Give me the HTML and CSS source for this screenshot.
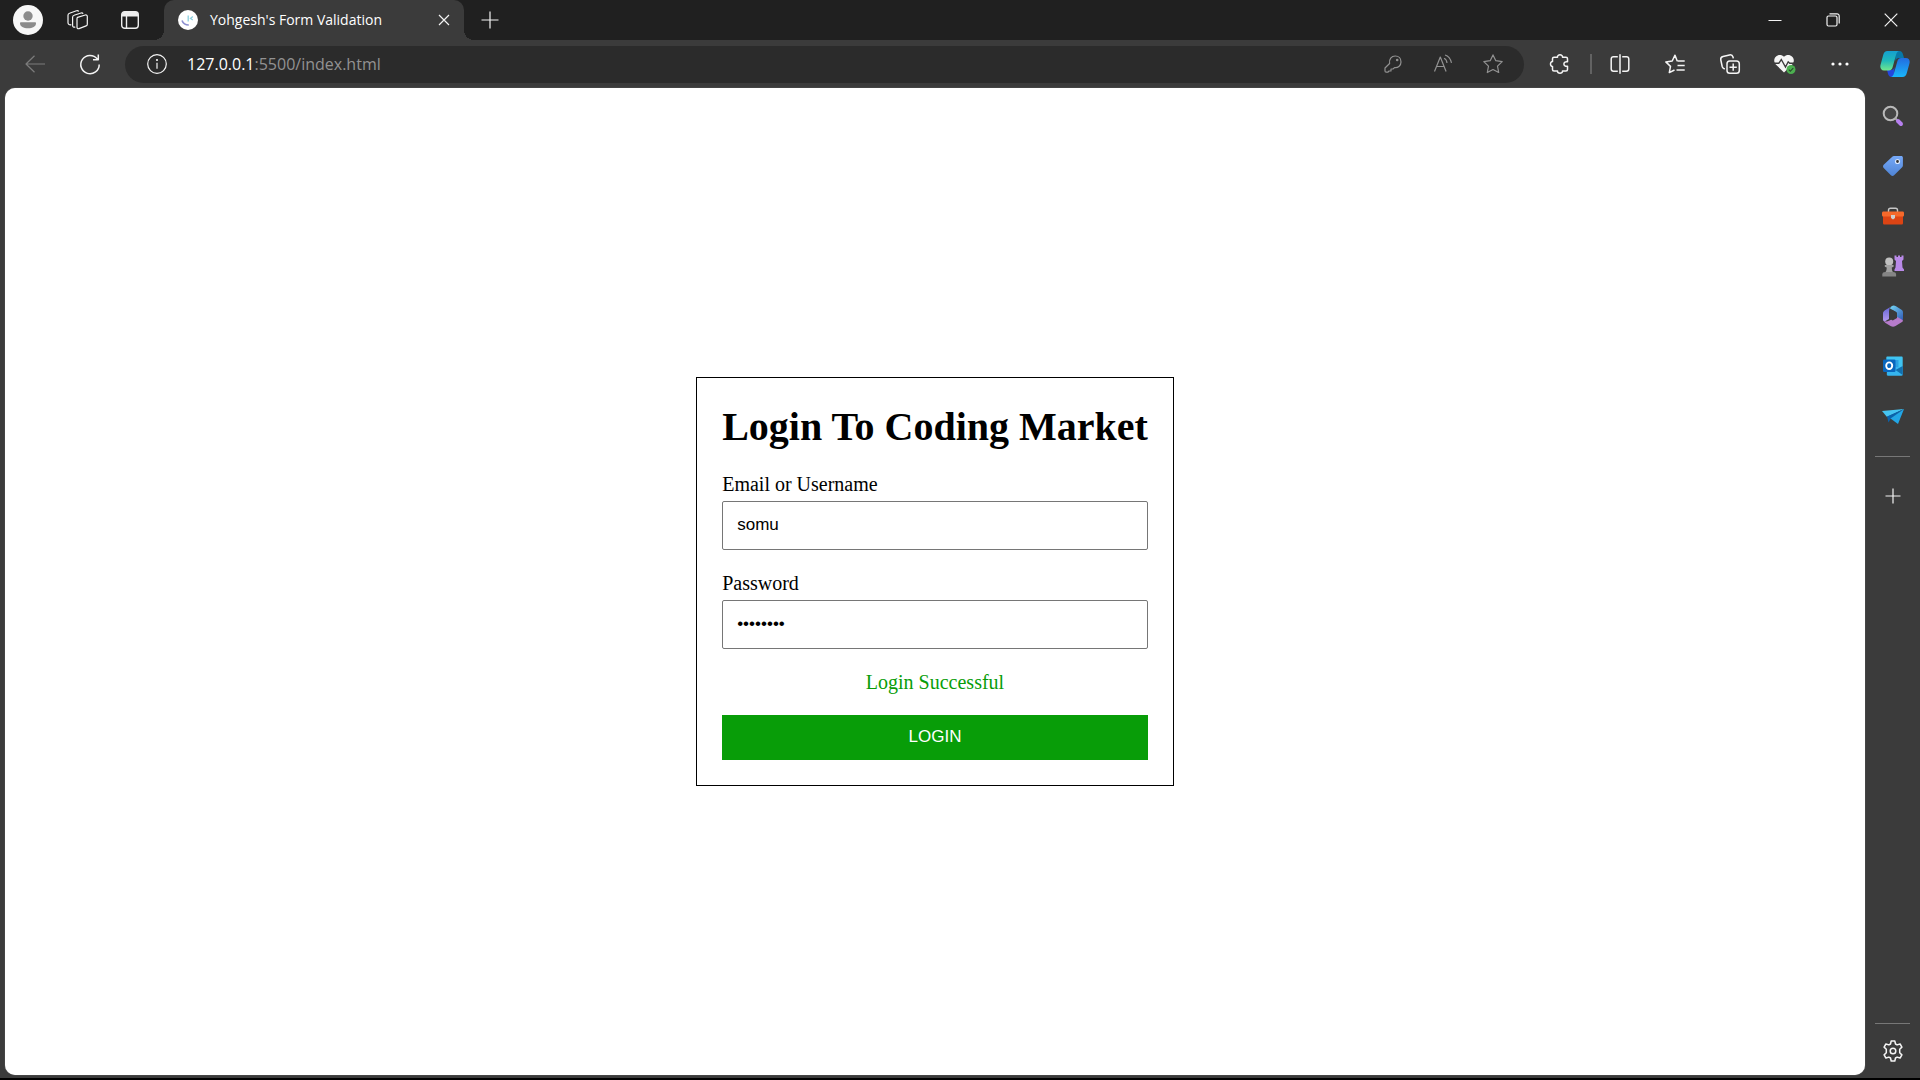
FILE: index.html
```html
<!DOCTYPE html>
<html lang="en">
<head>
<meta charset="utf-8">
<title>Yohgesh's Form Validation</title>
<link rel="stylesheet" href="styles.css">
</head>
<body class="browser">
<header class="titlebar">
  <button class="icon-btn" aria-label="Profile"><svg width="30" height="30" viewBox="0 0 30 30"><circle cx="15" cy="15" r="15" fill="#f7f7f7"/><circle cx="15" cy="11" r="4.7" fill="#8b8b8b"/><path d="M8 17.3h14c.6 0 1 .5 1 1 0 3.300-3.500 5-8 5s-8-1.700-8-5c0-.5.400-1 1-1z" fill="#8b8b8b"/></svg></button>
  <button class="icon-btn" aria-label="Workspaces"><svg width="24" height="22" viewBox="0 0 24 22" class="line"><path d="M10.500 8.400 18.300 6c1.100-.3 2 .3 2 1.400v7.800c0 .8-.4 1.400-1.200 1.700L12 19.600c-1.100.4-2-.2-2-1.300V9.700c0-.7.1-1.100.5-1.300zM8.300 18c-1.500.5-2.700-.1-2.700-1.600V8.300c0-1 .5-1.700 1.500-2L14 4c1-.3 1.700 0 2.100.8M4.300 15.700C2.500 16.200 1 15.300 1 13.700V6.200c0-1 .5-1.700 1.500-2l7-2.500c1-.3 1.800 0 2.200.8"/></svg></button>
  <button class="icon-btn" aria-label="Tab actions"><svg width="18" height="18" viewBox="0 0 18 18"><rect x=".7" y=".7" width="16.600" height="16.600" rx="3" fill="none" stroke="#eee" stroke-width="1.400"/><path d="M1 5V3a2 2 0 0 1 2-2h12a2 2 0 0 1 2 2v2.500H1z" fill="#eee"/><path d="M5.500 5v12" stroke="#eee" stroke-width="1.400"/></svg></button>
  <div class="tab">
    <svg width="20" height="20" viewBox="0 0 20 20" aria-hidden="true"><circle cx="10" cy="10" r="10" fill="#fff"/><path d="M4 10.500c1 2.700 3.500 4.500 6.800 4.500" fill="none" stroke="#8c8fd0" stroke-width="1.600"/><path d="M10.200 5.500v6M14.800 6.500l-2.300 2 2.300 1.500" fill="none" stroke="#8ccfdf" stroke-width="1.300"/></svg>
    <span class="tab-title">Yohgesh's Form Validation</span>
    <button class="tab-close" aria-label="Close tab"><svg width="12" height="12" viewBox="0 0 12 12" class="line"><path d="m1 1 10 10M11 1 1 11"/></svg></button>
  </div>
  <button class="icon-btn" aria-label="New tab"><svg width="18" height="18" viewBox="0 0 18 18" class="line"><path d="M9 .5v17M.5 9h17"/></svg></button>
  <div class="window-controls">
    <button class="win-btn" aria-label="Minimize"><svg width="14" height="14" viewBox="0 0 14 14" class="line crisp"><path d="M.5 7.500h13"/></svg></button>
    <button class="win-btn" aria-label="Restore"><svg width="14" height="14" viewBox="0 0 14 14" class="line"><rect x="1" y="3" width="10" height="10" rx="1.500"/><path d="M3.500.8h7.500a2.200 2.200 0 0 1 2.200 2.200v7.500"/></svg></button>
    <button class="win-btn" aria-label="Close"><svg width="14" height="14" viewBox="0 0 14 14" class="line"><path d="m.7.7 12.600 12.600M13.300.7.7 13.300"/></svg></button>
  </div>
</header>
<nav class="toolbar" aria-label="Browser">
  <button class="icon-btn dim" aria-label="Back"><svg width="20" height="18" viewBox="0 0 20 18" class="line"><path d="M9.500.7 1 9l8.500 8.300M1 9h19"/></svg></button>
  <button class="icon-btn" aria-label="Refresh"><svg width="20" height="20" viewBox="0 0 20 20" class="line bold"><path d="M17.300 5A9.200 9.200 0 1 0 19.200 10.500M18.300.5v5.300H13"/></svg></button>
  <div class="address">
    <button class="icon-btn" aria-label="Site information"><svg width="20" height="20" viewBox="0 0 20 20" class="line"><circle cx="10" cy="10" r="9.300"/><path d="M10 8.700v6"/><circle cx="10" cy="6" r=".5"/></svg></button>
    <div class="url" role="textbox" aria-label="Address" contenteditable="true" spellcheck="false"><span class="url-host">127.0.0.1</span>:5500/index.html</div>
    <button class="icon-btn grey" aria-label="Saved passwords"><svg width="20" height="20" viewBox="0 0 20 20" class="line"><path d="M6.600 9.500C5.800 5 8.500 2 12.200 2S18 4.700 18 8s-2.700 6-6.500 5.600L10 15H8v2H6l-1 1.200H3.200c-.8 0-1.200-.4-1.200-1.200V14z"/><circle cx="14.200" cy="6" r=".7"/></svg></button>
    <button class="icon-btn grey" aria-label="Read aloud"><svg width="20" height="20" viewBox="0 0 20 20" class="line"><path d="m1.500 17.500 5.800-14.500 5.800 14.500M3.500 12.500h7.700M11 4.300c1.700.7 2.800 2.400 3 4.700M12 1c3.400 1 5.600 4 6.500 7.800"/></svg></button>
    <button class="icon-btn grey" aria-label="Add to favorites"><svg width="20" height="20" viewBox="0 0 20 20" class="line"><path d="m10 .9 2.800 5.800 6.400.9-4.700 4.500 1.200 6.400-5.700-3-5.700 3 1.200-6.400L.8 7.600l6.400-.9z"/></svg></button>
  </div>
  <button class="icon-btn" aria-label="Extensions"><svg width="20" height="20" viewBox="0 0 20 20" class="line bold"><path d="M4 3.200h3.500C7.300 1.700 8.500.8 10 .8s2.700.9 2.500 2.400H16c.9 0 1.500.6 1.500 1.500v3.100c-2-.4-3.600.5-3.600 2.200s1.600 2.600 3.600 2.200v3.300c0 .9-.6 1.500-1.500 1.500h-3.500c.2 1.400-1 2.300-2.500 2.300s-2.700-.9-2.500-2.300H4c-.9 0-1.500-.6-1.500-1.500v-3C1.300 12.600.5 11.300.5 10s.8-2.500 2-2.400V4.700c0-.9.600-1.500 1.500-1.500z"/></svg></button>
  <span class="divider"></span>
  <button class="icon-btn" aria-label="Split screen"><svg width="20" height="20" viewBox="0 0 20 20" class="line bold"><path d="M7.800 2.800H3.500A2.300 2.300 0 0 0 1.200 5v10a2.300 2.300 0 0 0 2.300 2.200h4.300M12.200 2.800h4.300A2.300 2.300 0 0 1 18.800 5v10a2.300 2.300 0 0 1-2.300 2.200h-4.300M10 .3v19.400"/></svg></button>
  <button class="icon-btn" aria-label="Favorites"><svg width="20" height="20" viewBox="0 0 20 20" class="line bold"><path d="M12.300 7.300 10 1.200 7.200 7l-6.400.9 4.700 4.500-1.200 6.200L9.500 16M12.500 7h7.200M12.500 11.500h7.200M11.500 16h8.200"/></svg></button>
  <button class="icon-btn" aria-label="Collections"><svg width="20" height="20" viewBox="0 0 20 20" class="line bold"><rect x="7" y="7" width="12.300" height="12.300" rx="2.800"/><path d="M13.200 9.500v7.300M9.500 13.200h7.300M4.800 15 3.500 14.300a3 3 0 0 1-1.300-1.800L.8 6A3 3 0 0 1 3 2.500L9.500.9A3 3 0 0 1 13 3l.3 1.300"/></svg></button>
  <button class="icon-btn" aria-label="Browser essentials"><svg width="22" height="20" viewBox="0 0 22 20"><path d="M10 18.500 1.800 10.500C-.3 8.200-.3 4.900 1.800 2.700 4 .5 7.700.4 10 2.800 12.300.4 16 .5 18.200 2.700s2.100 5.500 0 7.800z" fill="#f4f4f4"/><path d="M0 9.300h4.800L7.300 5.500l4.200 7.500 2.700-5.200 1.500 1.500H21" fill="none" stroke="#3b3b3b" stroke-width="1.400"/><circle cx="17" cy="15.500" r="4.500" fill="#4caf50"/><path d="m14.800 15.600 1.500 1.500 3-3" fill="none" stroke="#294d2b" stroke-width="1.100"/></svg></button>
  <button class="icon-btn" aria-label="Settings and more"><svg width="18" height="4" viewBox="0 0 18 4" fill="#fff"><circle cx="2" cy="2" r="1.600"/><circle cx="9" cy="2" r="1.600"/><circle cx="16" cy="2" r="1.600"/></svg></button>
  <button class="icon-btn" aria-label="Copilot"><svg width="30" height="28" viewBox="0 0 30 28"><defs><linearGradient id="ca" x1="0" y1="0" x2="0" y2="1"><stop stop-color="#159fd0"/><stop offset=".5" stop-color="#20b9ba"/><stop offset="1" stop-color="#72e78c"/></linearGradient><linearGradient id="cb" x1="0" y1="0" x2="0" y2="1"><stop stop-color="#236ce0"/><stop offset="1" stop-color="#19b6fb"/></linearGradient></defs><path d="M15 1h4.500c2 0 2.900 1.400 3.500 3.500L24 8h-5c-2 0-3 1-3.500 3z" fill="#0878a8"/><path d="M14 27h-2.500c-2 0-3-1.300-3.500-3.200L7 20h4c2 0 3-1 3.600-3z" fill="#2446dc"/><path d="M7.500 1H19c-1.700.5-2.500 2-3 4l-3.300 12c-.6 2.300-1.700 3.500-4 3.500H4C1.200 20.500-.2 18 .5 15L3.200 5C3.900 2.500 5.200 1 7.500 1z" fill="url(#ca)"/><path d="M22.500 27H11c1.700-.5 2.500-2 3-4l3.300-11.500c.6-2.300 1.700-3.500 4-3.500H26c2.800 0 4.200 2.300 3.500 5.300L26.800 23c-.7 2.500-2 4-4.300 4z" fill="url(#cb)"/></svg></button>
</nav>
<div class="content">
  <main class="page">
    <form class="login-card" onsubmit="return false">
      <h1 class="login-title">Login To Coding Market</h1>
      <div class="field"><label for="username">Email or Username</label><input class="text-box" id="username" type="text" value="somu"></div>
      <div class="field"><label for="password">Password</label><input class="text-box" id="password" type="password" value="password"></div>
      <p class="message">Login Successful</p>
      <button class="login-btn" type="submit">LOGIN</button>
    </form>
  </main>
  <aside class="sidebar" aria-label="Sidebar">
    <button class="side-btn" aria-label="Search"><svg width="22" height="22" viewBox="0 0 22 22"><circle cx="8.500" cy="8.500" r="6.800" fill="#454545" stroke="#b9b9b9" stroke-width="2"/><path d="m13 13 3 3" stroke="#aaa" stroke-width="2"/><path d="m16 16 3 3" stroke="#b780f0" stroke-width="4" stroke-linecap="round"/></svg></button>
    <button class="side-btn" aria-label="Shopping"><svg width="22" height="22" viewBox="0 0 22 22"><defs><linearGradient id="t" x1="0" y1="0" x2="0" y2="1"><stop stop-color="#76a9f8"/><stop offset="1" stop-color="#4f84d5"/></linearGradient></defs><path d="M12.500 1h6.700c1 0 1.700.7 1.700 1.700v7.500c0 1-.3 1.600-1 2.300l-7.800 7.700c-1 1-2.200 1-3.200 0L1.700 13c-.9-1-.9-2.200 0-3.200L10 1.900c.8-.7 1.500-.9 2.500-.9z" fill="url(#t)"/><circle cx="15.500" cy="6.500" r="2" fill="#333" stroke="#d7e7ff" stroke-width="1.200"/></svg></button>
    <button class="side-btn" aria-label="Tools"><svg width="22" height="20" viewBox="0 0 22 20"><path d="M6.500 6V4.300c0-1.200.7-2 2-2h5c1.300 0 2 .8 2 2V6" fill="none" stroke="#c6c6c6" stroke-width="1.400"/><path d="M1 9h20v8c0 1-.6 1.500-1.500 1.500h-17C1.600 18.500 1 18 1 17z" fill="#dc4414"/><path d="M0 7c0-.9.500-1.500 1.500-1.500h19c1 0 1.500.6 1.500 1.500v2c0 1-.5 1.500-1.500 1.500h-19C.5 10.500 0 10 0 9z" fill="#f5692b"/><path d="M9 9h4v3l-2 1.500L9 12z" fill="#cfcfcf"/></svg></button>
    <button class="side-btn" aria-label="Games"><svg width="22" height="24" viewBox="0 0 22 24"><path d="M12.500 1.500h2V3H16V1.500h2V3h1.500V1.500h2v4L20 7l.5 6.500 1.500 2V17h-9.500v-1.500l1-2L14 7l-1.500-1.500z" fill="#b98ae8"/><circle cx="7.200" cy="7.500" r="4" fill="#c0c0c0"/><path d="M2.800 11h8.800v1.800l-1.800.7c0 2 .4 3.500 1.200 4.500H3.500c.8-1 1.200-2.500 1.200-4.500l-1.900-.7z" fill="#a1a1a1"/><path d="M.3 22.500V20.500c0-1.700 1.200-2.500 3-2.500h7.800c1.800 0 3 .8 3 2.500v2z" fill="#858585"/></svg></button>
    <button class="side-btn" aria-label="Microsoft 365"><svg width="22" height="22" viewBox="0 0 22 22"><defs><linearGradient id="ma" x1="0" y1="0" x2="0" y2="1"><stop stop-color="#5f62d6"/><stop offset="1" stop-color="#b49af0"/></linearGradient><linearGradient id="mb" x1="0" y1="0" x2="1" y2="1"><stop stop-color="#75d9f8"/><stop offset="1" stop-color="#3159b4"/></linearGradient></defs><path d="M10.500.8 3 5.200C1.700 6 1 7 1 8.500v6c0 1.600 1.200 2.300 2.500 1.500L7 14V6.500c0-2.500 1-4.600 3.500-5.700z" fill="url(#ma)"/><path d="m10 .9 1.500-.5c1 0 1.700.4 2.500.9l5.500 3.500c1 .7 1.500 1.700 1.500 3v6.200c0 1-.6 1.700-1.500 1.200L15 12.500V9c0-1.300-.5-2-1.500-2.600L8 3.500C8.500 2 9 1.500 10 .9z" fill="url(#mb)"/><path d="m7.500 15.500 7-4 5.700 3.200c1 .7 1 1.500-.2 2.300l-6.500 4c-1.700 1-3.200 1-5 0l-5-3c-1-.7-1.500-1.500-2-2.500 1.500 1.200 3.500 1.200 6 0z" fill="#b67bcb"/><path d="m7 7.500 3.800-2.200L15 8v5l-4.200 2.500L7 13.500z" fill="#3b3b3b"/></svg></button>
    <button class="side-btn" aria-label="Outlook"><svg width="22" height="22" viewBox="0 0 22 22"><path d="M5.500 1.500h14c.8 0 1.200.4 1.200 1.200V12H4.300V2.700c0-.8.400-1.200 1.200-1.200z" fill="#3fc4f2"/><path d="M4.300 5h8v8h-8z" fill="#1a82d1"/><path d="M12.300 5h4.200v7h-4.200z" fill="#2b9fe2"/><path d="M5 12h15.700v7.500c0 .8-.4 1.200-1.200 1.200H6c-.8 0-1.200-.4-1.200-1.200z" fill="#35b5ef"/><path d="m13.500 15 7.200-4v9z" fill="#126fae"/><rect x="1" y="4.500" width="12.500" height="12.500" rx="1.200" fill="#0966bd"/><ellipse cx="7.200" cy="10.700" rx="3" ry="3.300" fill="none" stroke="#fff" stroke-width="1.900"/></svg></button>
    <button class="side-btn" aria-label="Drop"><svg width="22" height="18" viewBox="0 0 22 18"><path d="M0 4 22 2 5 10z" fill="#46c5f2"/><path d="M5 9.500 22 2 8.500 12 6.500 15.500z" fill="#0a62ac"/><path d="M8.500 11.500 22 2l-6 15z" fill="#22a6e6"/></svg></button>
    <hr class="side-rule">
    <button class="side-btn" aria-label="Customize"><svg width="16" height="16" viewBox="0 0 16 16" class="line"><path d="M8 .5v15M.5 8h15"/></svg></button>
    <hr class="side-rule lower">
    <button class="side-btn" aria-label="Settings"><svg width="22" height="22" viewBox="0 0 22 22" class="line bold"><path d="M9.200 1h3.600l.7 3 1.600.9 3-.9 1.800 3.100L17.700 9.200v3.600l2.200 2.100-1.800 3.100-3-.9-1.600.9-.7 3H9.200l-.7-3-1.600-.9-3 .9-1.800-3.100 2.200-2.100V9.200L2.100 7.100 3.900 4l3 .9L8.500 4z"/><circle cx="11" cy="11" r="2.800"/></svg></button>
  </aside>
</div>
</body>
</html>
```
FILE: styles.css
```css
* { box-sizing: border-box; }

.browser {
  display: flex;
  flex-direction: column;
  min-height: 100vh;
  margin: 0;
  border-bottom: 2px solid #000;
  background: #3b3b3b;
  color: #fff;
  font-family: "Open Sans", "Noto Sans", sans-serif;
}

button { font: inherit; color: inherit; }

.icon-btn, .tab-close, .win-btn, .side-btn {
  display: flex;
  align-items: center;
  justify-content: center;
  flex: none;
  padding: 0;
  border: 0;
  background: none;
  color: #f4f4f4;
}

.icon-btn { width: 50px; height: 36px; }
.icon-btn.dim { color: #7c7c7c; }
.icon-btn.grey { color: #929292; }

.line {
  fill: none;
  stroke: currentColor;
  stroke-width: 1.2;
  stroke-linejoin: round;
  overflow: visible;
}
.line.bold { stroke-width: 1.5; }
.line.crisp { stroke-width: 1; }

/* Title bar */
.titlebar {
  display: flex;
  align-items: center;
  gap: 1px;
  height: 40px;
  padding-left: 3px;
  background: #202020;
}

.tab {
  position: relative;
  display: flex;
  align-items: center;
  width: 300px;
  height: 40px;
  margin-left: 8px;
  padding: 0 5px 0 14px;
  border-radius: 10px 10px 0 0;
  background: #3b3b3b;
}
.tab::before, .tab::after {
  content: "";
  position: absolute;
  bottom: 0;
  width: 10px;
  height: 10px;
}
.tab::before { right: 100%; background: radial-gradient(circle at 0 0, #202020 10px, #3b3b3b 10px); }
.tab::after { left: 100%; background: radial-gradient(circle at 100% 0, #202020 10px, #3b3b3b 10px); }

.tab-title {
  flex: 1;
  padding-left: 12px;
  font-size: 14px;
  line-height: 20px;
  white-space: nowrap;
}
.tab-close { width: 30px; height: 30px; }

.window-controls { display: flex; margin-left: auto; }
.win-btn { width: 58px; height: 38px; }

/* Toolbar */
.toolbar {
  display: flex;
  align-items: center;
  gap: 5px;
  height: 48px;
  padding: 0 0 0 10px;
}
.address {
  display: flex;
  align-items: center;
  flex: 1;
  height: 37px;
  margin: 0 6px 0 5px;
  padding: 0 6px 0 7px;
  border-radius: 19px;
  background: #2b2b2b;
}
.url {
  flex: 1;
  padding-left: 5px;
  color: #929292;
  font-size: 16px;
  line-height: 24px;
  white-space: nowrap;
}
.url-host { color: #fff; }
.divider {
  width: 2px;
  height: 20px;
  margin-right: -2px;
  background: #626262;
}

/* Page and sidebar */
.content { display: flex; flex: 1; }
.page {
  display: flex;
  align-items: center;
  justify-content: center;
  flex: 1;
  margin: 0 0 3px 5px;
  border-radius: 10px;
  background: #fff;
  box-shadow: 0 0 1px #999;
  color: #000;
  font-family: "Liberation Serif", "Times New Roman", serif;
  font-size: 20px;
}

.login-card {
  display: flex;
  flex-direction: column;
  gap: 21px;
  padding: 25px;
  border: 1px solid #000;
}
.login-title {
  margin: 0;
  font-size: 40px;
  line-height: 48px;
  white-space: nowrap;
}
.field {
  display: flex;
  flex-direction: column;
  gap: 5px;
  line-height: 24px;
}
.text-box {
  height: 49px;
  padding: 0 14px 2px;
  border: 1px solid #767676;
  border-radius: 2px;
  background: #fff;
  color: #000;
  font-family: "Liberation Sans", Arial, sans-serif;
  font-size: 17px;
}
.message {
  margin: 0;
  color: #089d08;
  line-height: 24px;
  text-align: center;
}
.login-btn {
  height: 45px;
  padding: 0 0 2px;
  border: 0;
  background: #089d08;
  color: #fff;
  font-family: "Liberation Sans", Arial, sans-serif;
  font-size: 17px;
}

.sidebar {
  display: flex;
  flex-direction: column;
  width: 55px;
  padding: 3px 0 2px;
}
.side-btn { width: 55px; height: 50px; }
.side-rule {
  width: 35px;
  height: 1px;
  margin: 15px auto 14px;
  border: 0;
  background: #777;
}
.side-rule.lower { margin: auto auto 2px; }
```
